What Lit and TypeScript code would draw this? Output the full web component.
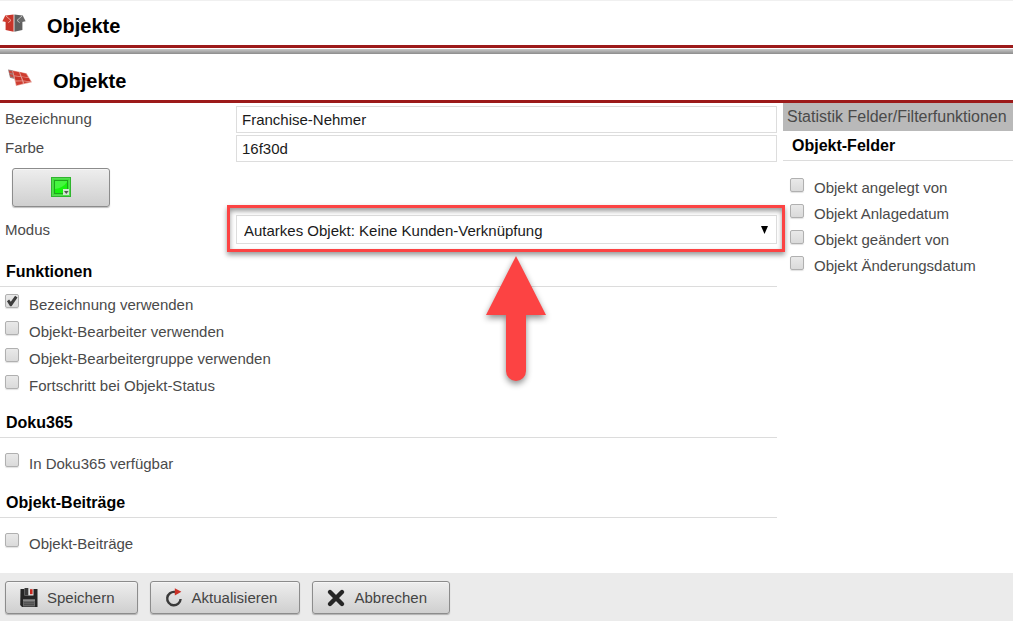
import { LitElement, html, css, svg } from "lit";
import { customElement, property } from "lit/decorators.js";

const boxIcon = svg`
  <svg class="icon" width="24" height="18" viewBox="0 0 24 18" aria-hidden="true">
    <path d="M3.6 1.4 11.6.5V17.8L3.6 16z" fill="#c9352a"/>
    <path d="M20.4 1.4 12.4.5V17.8L20.4 16z" fill="#5f5f5f"/>
    <path d="M3.4 1.2 8.8 6.4 6.2 8.6.4 7.2z" fill="#d03c2e"/>
    <path d="M20.6 1.2 15.2 6.4 17.8 8.6 23.6 7.2z" fill="#6b6b6b"/>
    <path d="M3.8 1.8 9 6.4 6.3 8.7" fill="none" stroke="#f3c3bd" stroke-width=".8"/>
    <path d="M20.2 1.8 15 6.4 17.7 8.7" fill="none" stroke="#d4d4d4" stroke-width=".8"/>
  </svg>`;

const panelIcon = svg`
  <svg class="icon" width="24" height="18" viewBox="0 0 24 18" aria-hidden="true">
    <path d="M0 .5 5 1.3 7.4 10.2 2 8.8z" fill="#9a8584"/>
    <path d="M.8 1.6 4.2 2.2 4.8 4.6 1.4 4zM1.6 5 5 5.7 5.6 8.4 2.3 7.6z" fill="#c8473c"/>
    <path d="M4.2 1.2 18.6 4.2 24 13.2 8 17z" fill="#e59c94"/>
    <path d="M5 2 11 3.2 12.4 7.2 6.3 6.4zM12 3.3 18 4.7 20.2 8.2 13.6 7.4z" fill="#cf3d30"/>
    <path d="M6.5 7.2 12.7 8 14 11.4 7.5 11.6zM13.9 8.1 20.7 9 22.8 12.4 15.2 11.4z" fill="#c93428"/>
    <path d="M7.7 12.4 14.2 12.2 15 14.6 8.6 16.2zM15.5 12.2 21.6 13 16.1 14.3z" fill="#cf3d30"/>
  </svg>`;

const saveIcon = svg`
  <svg width="20" height="20" viewBox="0 0 20 20" aria-hidden="true">
    <path d="M1.5 1H18.5V19H3L1.2 17z" fill="#252525"/>
    <path d="M5.5 0h9v7.5h-9z" fill="#e2e2e2"/>
    <path d="M5.5 0h3.8v7.5H5.5z" fill="#3a3a3a"/>
    <path d="M11 1.2h2.6v5H11z" fill="#c8281e"/>
    <path d="M4 11.5h12V18.5H4z" fill="#6a6a6a"/>
    <path d="M4 11.5h12v1.2H4z" fill="#999"/>
    <path d="M5 14.8h10M5 16.6h10" stroke="#444" stroke-width=".8"/>
  </svg>`;

const refreshIcon = svg`
  <svg width="20" height="20" viewBox="0 0 20 20" aria-hidden="true">
    <path d="M11 4A6.7 6.7 0 1 0 16.6 11" fill="none" stroke="#3a3a3a" stroke-width="2.4"/>
    <path d="M10.8.2 17.4 3.8 10.8 7.6z" fill="#cb3127"/>
  </svg>`;

const cancelIcon = svg`
  <svg width="20" height="20" viewBox="0 0 20 20" aria-hidden="true">
    <path d="M4 4 16 16M16 4 4 16" stroke="#262626" stroke-width="4.4" stroke-linecap="round"/>
  </svg>`;

const colorIcon = svg`
  <svg width="20" height="20" viewBox="0 0 20 20" aria-hidden="true">
    <rect x=".5" y=".5" width="19" height="19" fill="#3fe03a" stroke="#2fb52e"/>
    <rect x="1.5" y="1.5" width="17" height="17" fill="none" stroke="#55dc50"/>
    <rect x="3.5" y="3.5" width="13" height="13" fill="#16f30d" stroke="#1fa31c"/>
    <path d="M4 12Q12 11 16 5V4H4z" fill="#45f53f"/>
    <rect x="12" y="12" width="6" height="6" fill="#cfe6cf"/>
    <path d="M13 14h4.6L15.3 17z" fill="#555"/>
  </svg>`;

interface Option {
  id: string;
  label: string;
  checked?: boolean;
}

@customElement("check-list")
class CheckList extends LitElement {
  @property({ attribute: false }) options: Option[] = [];

  static styles = css`
    :host {
      display: block;
      --row: 27px;
    }
    :host([compact]) {
      --row: 26px;
    }
    .row {
      display: flex;
      align-items: center;
      gap: 10px;
      height: var(--row);
    }
    .box {
      appearance: none;
      flex: none;
      box-sizing: border-box;
      width: 14px;
      height: 14px;
      margin: 0 0 7px;
      border: 1px solid #b0b0b0;
      border-radius: 2px;
      background: linear-gradient(#e9e9e9, #dadada);
      box-shadow: 0 1px 1px rgba(0, 0, 0, 0.12);
      display: grid;
      place-items: center;
    }
    .box:checked::before {
      content: "";
      width: 12px;
      height: 12px;
      background: #3c3c3c;
      clip-path: polygon(8% 52%, 26% 38%, 40% 56%, 76% 6%, 96% 20%, 46% 94%, 34% 94%);
    }
    .text {
      line-height: 20px;
    }
  `;

  render() {
    return this.options.map(
      (o) => html`
        <div class="row">
          <input class="box" type="checkbox" id=${o.id} .checked=${!!o.checked} />
          <label class="text" for=${o.id}>${o.label}</label>
        </div>
      `
    );
  }
}

@customElement("app-root")
class AppRoot extends LitElement {
  static styles = css`
    :host {
      display: block;
      min-height: 100vh;
      background: #fff;
      color: #4a4a4a;
      font: 15px/20px "Liberation Sans", Arial, sans-serif;
    }
    .bar {
      display: flex;
      align-items: center;
      gap: 21px;
      height: 45px;
      padding-left: 2px;
      border-bottom: 3px solid #9c1a1a;
    }
    .bar.first {
      box-shadow: inset 0 1px #f0f0f0;
    }
    .bar.sub {
      padding-left: 8px;
    }
    .title {
      margin: 0;
      padding-top: 6px;
      color: #000;
      font-size: 20px;
      line-height: 24px;
    }
    .divider {
      height: 5px;
      margin: 1px 0;
      background: linear-gradient(#c8c8c8, #8c8c8c);
    }
    .columns {
      display: grid;
      grid-template-columns: minmax(0, 1fr) 230px;
      column-gap: 6px;
    }
    .main {
      padding: 3px 0 16px;
    }
    .field {
      display: grid;
      grid-template-columns: 236px minmax(0, 1fr);
      align-items: center;
      margin-bottom: 2px;
    }
    .field.mode {
      margin: 8px 0 14px;
    }
    .caption {
      padding-left: 5px;
      padding-bottom: 2px;
    }
    .mode .caption {
      padding-bottom: 0;
    }
    .input,
    .select {
      box-sizing: border-box;
      width: 100%;
      height: 27px;
      margin: 0;
      padding: 0 5px;
      border: 1px solid #ddd;
      border-radius: 0;
      background: #fff;
      color: #1a1a1a;
      font: inherit;
      outline: none;
    }
    .select {
      display: block;
      appearance: none;
      height: 29px;
      padding: 2px 24px 0 7px;
    }
    .picker {
      position: relative;
    }
    .caret {
      position: absolute;
      right: 9px;
      top: 11px;
      pointer-events: none;
    }
    .frame {
      position: absolute;
      inset: -10px -8px -8px -9px;
      border: 3px solid #fc4343;
      box-shadow: 0 3px 5px rgba(0, 0, 0, 0.4), inset 0 3px 5px rgba(0, 0, 0, 0.4);
      pointer-events: none;
    }
    .pointer {
      position: absolute;
      left: calc(50% - 21px);
      top: 41px;
      overflow: visible;
      filter: drop-shadow(0 3px 3px rgba(0, 0, 0, 0.45));
      pointer-events: none;
    }
    .button {
      box-sizing: border-box;
      display: inline-flex;
      align-items: center;
      justify-content: center;
      gap: 8px;
      height: 33px;
      margin: 0;
      padding: 0 22px 0 13px;
      border: 1px solid #8c8c8c;
      border-radius: 3px;
      background: linear-gradient(#eee, #cfcfcf);
      box-shadow: 0 1px 1px rgba(0, 0, 0, 0.25), inset 0 1px #f6f6f6;
      color: #444;
      font: inherit;
    }
    .button.color {
      display: flex;
      width: 98px;
      height: 39px;
      margin: 6px 7px 0 12px;
      padding: 0 0 2px;
    }
    .heading {
      margin: 0;
      padding-left: 6px;
      border-bottom: 1px solid #dcdcdc;
      color: #000;
      font-size: 16px;
      line-height: 28px;
    }
    .list {
      padding: 12px 0 12px 5px;
    }
    .list.tight {
      padding: 4px 0 10px 5px;
    }
    .list.last {
      padding-bottom: 0;
    }
    .side-title {
      margin: 0;
      padding-left: 4px;
      background: #b9b9b9;
      font-size: 16px;
      font-weight: normal;
      line-height: 28px;
      white-space: nowrap;
    }
    .side .heading {
      padding-top: 1px;
      padding-left: 9px;
    }
    .side .list {
      padding: 14px 0 0 7px;
    }
    .footer {
      display: flex;
      gap: 12px;
      padding: 8px 5px 7px;
      background: #ebebeb;
    }
  `;

  private functions: Option[] = [
    { id: "f1", label: "Bezeichnung verwenden", checked: true },
    { id: "f2", label: "Objekt-Bearbeiter verwenden" },
    { id: "f3", label: "Objekt-Bearbeitergruppe verwenden" },
    { id: "f4", label: "Fortschritt bei Objekt-Status" },
  ];
  private doku: Option[] = [{ id: "d1", label: "In Doku365 verfügbar" }];
  private posts: Option[] = [{ id: "p1", label: "Objekt-Beiträge" }];
  private fields: Option[] = [
    { id: "o1", label: "Objekt angelegt von" },
    { id: "o2", label: "Objekt Anlagedatum" },
    { id: "o3", label: "Objekt geändert von" },
    { id: "o4", label: "Objekt Änderungsdatum" },
  ];

  render() {
    return html`
      <header class="bar first">${boxIcon}<h1 class="title">Objekte</h1></header>
      <div class="divider"></div>
      <header class="bar sub">${panelIcon}<h2 class="title">Objekte</h2></header>

      <div class="columns">
        <main class="main">
          <div class="field">
            <label class="caption" for="name">Bezeichnung</label>
            <input class="input" id="name" type="text" value="Franchise-Nehmer" />
          </div>
          <div class="field">
            <label class="caption" for="color">Farbe</label>
            <input class="input" id="color" type="text" value="16f30d" />
          </div>
          <button class="button color" type="button" aria-label="Farbe">${colorIcon}</button>
          <div class="field mode">
            <label class="caption" for="mode">Modus</label>
            <div class="picker">
              <select class="select" id="mode">
                <option>Autarkes Objekt: Keine Kunden-Verknüpfung</option>
              </select>
              <svg class="caret" width="7" height="8" viewBox="0 0 7 8" aria-hidden="true">
                <path d="M0 0h7L3.5 8z" fill="#000" />
              </svg>
              <div class="frame"></div>
              <svg class="pointer" width="60" height="126" viewBox="0 0 60 126" aria-hidden="true">
                <path d="M30 0 60 59H40V115a10 10 0 0 1-20 0V59H0z" fill="#fc4343" />
              </svg>
            </div>
          </div>

          <h3 class="heading">Funktionen</h3>
          <check-list class="list tight" .options=${this.functions}></check-list>
          <h3 class="heading">Doku365</h3>
          <check-list class="list" .options=${this.doku}></check-list>
          <h3 class="heading">Objekt-Beiträge</h3>
          <check-list class="list last" .options=${this.posts}></check-list>
        </main>

        <aside class="side">
          <h3 class="side-title">Statistik Felder/Filterfunktionen</h3>
          <h3 class="heading">Objekt-Felder</h3>
          <check-list class="list" compact .options=${this.fields}></check-list>
        </aside>
      </div>

      <footer class="footer">
        <button class="button" type="button">${saveIcon}Speichern</button>
        <button class="button" type="button">${refreshIcon}Aktualisieren</button>
        <button class="button" type="button">${cancelIcon}Abbrechen</button>
      </footer>
    `;
  }
}
